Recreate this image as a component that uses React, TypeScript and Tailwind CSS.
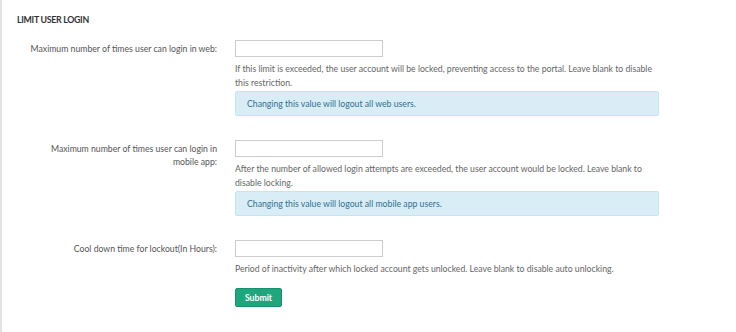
export default function App() {
  const rows = [
    {
      label: "Maximum number of times user can login in web:",
      help: "If this limit is exceeded, the user account will be locked, preventing access to the portal. Leave blank to disable this restriction.",
      note: "Changing this value will logout all web users.",
    },
    {
      label: "Maximum number of times user can login in mobile app:",
      help: "After the number of allowed login attempts are exceeded, the user account would be locked. Leave blank to disable locking.",
      note: "Changing this value will logout all mobile app users.",
    },
    {
      label: "Cool down time for lockout(In Hours):",
      help: "Period of inactivity after which locked account gets unlocked. Leave blank to disable auto unlocking.",
      note: "",
    },
  ];

  return (
    <div className="h-[332px] w-[736px] bg-white border-l-2 border-[#e3e3e3] font-['Lato',sans-serif] text-[#555]">
      <div className="pl-[15px] pt-[14px]">
        <h3 className="text-[8.8px] font-bold uppercase leading-[12px] tracking-[-0.3px] text-[#333]">
          Limit User Login
        </h3>

        <form className="mt-[14px] flex flex-col">
          {rows.map((r, i) => (
            <div key={i} className={`flex ${i > 0 ? "mt-[24px]" : ""}`}>
              <label className="ml-[8px] w-[192px] shrink-0 pt-[2px] text-right text-[8.7px] leading-[13px] text-[#555]">
                {r.label}
              </label>
              <div className="ml-[18px] w-[424px]">
                <input
                  type="text"
                  className="block h-[17px] w-[148px] border border-[#ccc] bg-white outline-none"
                />
                <p className="mt-[5px] text-[8.7px] leading-[14px] text-[#666]">{r.help}</p>
                {r.note ? (
                  <div className="mt-[1px] flex h-[25px] items-center rounded-[2px] border border-[#bce8f1] bg-[#d9edf7] px-[11px] text-[8.7px] text-[#31708f]">
                    {r.note}
                  </div>
                ) : (
                  <button
                    type="button"
                    className="mt-[12px] h-[19px] w-[47px] rounded-[2px] border border-[#179070] bg-[#1fa67d] text-[8.7px] font-bold text-white"
                  >
                    Submit
                  </button>
                )}
              </div>
            </div>
          ))}
        </form>
      </div>
    </div>
  );
}
